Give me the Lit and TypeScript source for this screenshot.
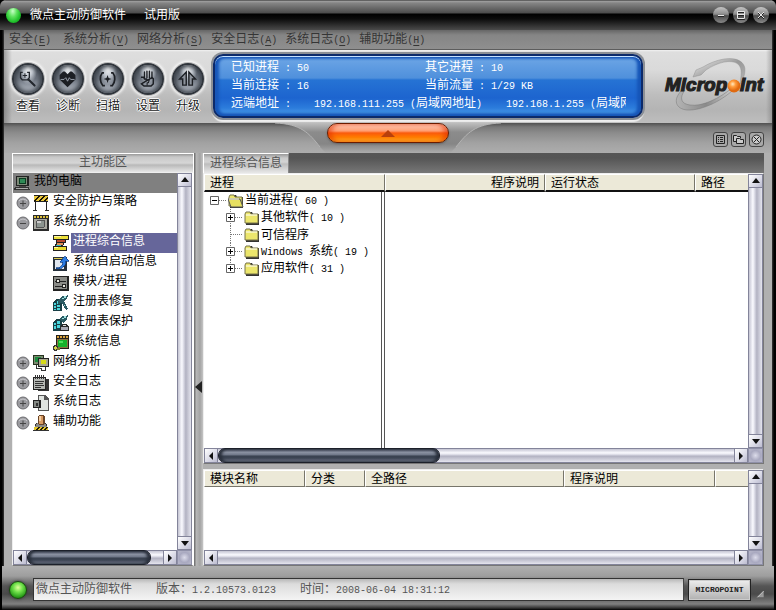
import { LitElement, html, css, svg, nothing } from "lit";
import { customElement, state, property } from "lit/decorators.js";
import { classMap } from "lit/directives/class-map.js";

// Half-width characters sit on a 6px grid next to 12px ideographs.
const mixed = (text: string) =>
  text
    .split(/([\x20-\x7e]+)/)
    .filter((s) => s.length)
    .map((s) => (/^[\x20-\x7e]+$/.test(s) ? html`<span class="half">${s}</span>` : s));

const shared = css`
  * { box-sizing: border-box; }
  :host {
    font: 12px/16px "Liberation Sans", "Noto Sans CJK SC", sans-serif;
    color: #000;
  }
  .half {
    font-family: "Liberation Mono", monospace;
    font-size: 10px;
    white-space: pre;
  }
  button {
    font: inherit;
    color: inherit;
    background: none;
    border: 0;
    padding: 0;
    margin: 0;
    cursor: pointer;
  }
  svg { display: block; }
`;

const toolIcons: Record<string, unknown> = {
  查看: svg`<path d="M5.500 4H3v6l2 2.500h6l2-2.500V4h-2.500" fill="none" stroke="#22262c" stroke-width="1.500"/><path d="M5.500 7.500h5M8 5v5" stroke="#22262c" stroke-width="1.200"/><path d="M12 12l7 7" stroke="#22262c" stroke-width="2.400" stroke-linecap="round"/>`,
  诊断: svg`<path d="M11 21L2 12V7l4-4h2l3 3 3-3h2l4 4v5z" fill="#1c1f24"/><path d="M3 12h4l2-2 2 4 2-4 1.500 2H19" fill="none" stroke="#a4acb8" stroke-width="1"/>`,
  扫描: svg`<path d="M7 4.500H5C1.500 9 2.500 15 5.500 19h2.500M15 4.500h2C20.500 9 19.500 15 16.500 19H14" fill="none" stroke="#1c1f24" stroke-width="1.900"/><path d="M11 7l1.200 3.300L15.500 11.500l-3.300 1.200L11 16l-1.200-3.300L6.500 11.500l3.300-1.200z" fill="#1c1f24"/>`,
  设置: svg`<path d="M7.500 10V3.500M10.300 10V2.500M13.100 10V2.500M16 11V3.500" stroke="#1c1f24" stroke-width="1.600" stroke-linecap="round"/><path d="M3.500 9.500h3l1 2h3M16 10l1.500 1v6L15 19.500H7L4 17z" fill="none" stroke="#1c1f24" stroke-width="1.600"/><path d="M8.500 12.500H13l-1 3-1.500.5v3" fill="none" stroke="#1c1f24" stroke-width="1.200"/>`,
  升级: svg`<path d="M9.500 18.500V3.500L2 11.500h3.500v7zM12.500 18.500V3.500l7.500 8h-3.500v7z" fill="#8d939c" stroke="#1c1f24" stroke-width="1.600"/>`,
};

const stripes = svg`<path d="M1 1h14v5H1z" fill="#e9c63a"/><path d="M1 5l4-4h2L2 6H1zM5 6l5-5h2L7 6zM10 6l5-5v2l-3 3z" fill="#1a1400"/>`;

const treeIcons: Record<string, unknown> = {
  computer: svg`<path d="M2 1h13v10H2z" fill="#222"/><path d="M3 2h10v8H3z" fill="#7d8a78"/><path d="M5 3h7v6H5z" fill="#0c3b22"/><path d="M6 4h5v4H6z" fill="#2f8a56"/><path d="M5 11h7v1H5z" fill="#444"/><path d="M1 12h14l1 3H0z" fill="#333"/><path d="M2 13h12v1H2z" fill="#aaa"/>`,
  barrier: svg`${stripes}<path d="M1 0h14v1H1zM1 6h14v1H1z" fill="#222"/><path d="M2 6h1v9H2zM13 6h1v9h-1z" fill="#222"/><path d="M0 15h4v1H0zM12 15h4v1h-4z" fill="#333"/>`,
  monitor: svg`<path d="M0 0h16v16H0z" fill="#2b2b2b"/><path d="M1 1h14v2H1z" fill="#d9bd3c"/><path d="M3 1h1v2H3zM6 1h1v2H6zM9 1h1v2H9zM12 1h1v2h-1z" fill="#222"/><path d="M1 4h13v10H1z" fill="#a8a8a0"/><rect x="3" y="5" width="9" height="8" rx="2" fill="#555"/><path d="M4 6h7v6H4z" fill="#8d9590"/><path d="M4 6h4v2H4z" fill="#ccc"/>`,
  bars: svg`<path d="M0 0h16v5h-3v3h-2v2h-1v1h4v5H0v-5h2V9h1V5H0z" fill="#222"/><path d="M1 1h14v3H1z" fill="#ece03a"/><path d="M1 1h7v1H1z" fill="#fff9a0"/><path d="M4 5h8v2H4z" fill="#b8492c"/><path d="M4 8h6v2H4z" fill="#e09058"/><path d="M3 10h5v1H3z" fill="#32bac4"/><path d="M1 12h12v3H1z" fill="#e8dc30"/><path d="M1 12h4v1H1z" fill="#fff9a0"/>`,
  startup: svg`<path d="M0 2h14v14H0z" fill="#26303c"/><path d="M1 3h9v1H1z" fill="#e0cc50"/><path d="M2 5h9v9H2z" fill="#dfe6f0"/><path d="M3 13c5 0 7-3 7-6H7l5-6 4 5h-3c0 5-3 8-10 8z" fill="#2c7be0" stroke="#0c3a80" stroke-width=".7"/>`,
  module: svg`<rect width="16" height="15" y="1" rx="1" fill="#222"/><path d="M1 2h13v12H1z" fill="#8b8c88"/><path d="M2 6h11v1H2zM2 11h11v1H2z" fill="#222"/><path d="M3 4h4v4H3zM9 9h4v4H9z" fill="#222"/><path d="M4 5h2v2H4zM10 10h2v2h-2z" fill="#e8e8e0"/>`,
  repair: svg`<path d="M0 7l4-3 5 1v11H0z" fill="#183f46"/><path d="M1 8h2v2H1zM4 6h3v3H4zM1 11h2v2H1zM4 10h3v2H4zM1 14h2v1H1zM4 13h3v2H4z" fill="#48d5dc"/><path d="M6 4l4-4 1 2 4-2-1 4-3 2 4 8-2 1-5-8-2 3-1-3z" fill="#2b5a62"/><path d="M8 4l2-2 1 2zM11 1h2v2h-2zM11 9l3 5-3-4z" fill="#9fe4e4"/>`,
  protect: svg`<path d="M0 7l4-3 5 1v11H0z" fill="#183f46"/><path d="M1 8h2v2H1zM4 6h3v3H4zM1 11h2v3H1zM4 10h3v3H4z" fill="#48d5dc"/><path d="M6 4l4-4 1 2 4-2-1 4-4 4z" fill="#2b5a62"/><path d="M8 4l2-2 1 2zM11 1h2v2h-2z" fill="#9fe4e4"/><path d="M7 11l2-2h4l3 2v5H7z" fill="#2a2a2a"/><path d="M8 12h7v3H8z" fill="#a9a9b4"/><path d="M10 10h3v1h-3z" fill="#ddd"/>`,
  sysinfo: svg`<path d="M3 0h13v14H3z" fill="#252018"/><path d="M4 1h11v2H4z" fill="#d9a23c"/><path d="M6 1h1v2H6zM9 1h1v2H9zM12 1h1v2h-1z" fill="#222"/><path d="M4 4h11v9H4z" fill="#8a7444"/><path d="M5 5h9v7H5z" fill="#16b22a"/><path d="M6 6h4v2H6z" fill="#4de05a"/><circle cx="2.500" cy="13" r="2.200" fill="#d8d448" stroke="#333"/><path d="M4 13h3v2H4z" fill="#807a30"/>`,
  network: svg`<path d="M0 0h11v10H0z" fill="#25331f"/><path d="M1 1h9v8H1z" fill="#7c8a70"/><path d="M2 2h6v5H2z" fill="#1b8a3c"/><path d="M5 3h11v9H5z" fill="#222"/><path d="M6 4h9v7H6z" fill="#a9a890"/><path d="M8 5h5v4H8z" fill="#d8dc18"/><path d="M3 10v3h5v2h4v-3" fill="none" stroke="#333"/>`,
  notes: svg`<path d="M12 4h4v12H5v-2h7z" fill="#333"/><path d="M0 2h13v13H0z" fill="#222"/><path d="M1 3h11v11H1z" fill="#b5b8b4"/><path d="M2 0h1v4H2zM4 0h1v4H4zM6 0h1v4H6zM8 0h1v4H8zM10 0h1v4h-1z" fill="#333"/><path d="M2 6h9v1H2zM2 8h8v1H2zM2 10h9v1H2zM2 12h6v1H2z" fill="#333"/>`,
  syslog: svg`<path d="M5 0h7l4 4v12H5z" fill="#555"/><path d="M6 1h5v4h4v10H6z" fill="#dfe3df"/><path d="M0 5h8v8H0z" fill="#222"/><path d="M1 6h5v6H1z" fill="#858a85"/><path d="M3 8h2v3H3z" fill="#333"/>`,
  helper: svg`<path d="M3 8h10l3 8H0z" fill="#333"/><path d="M4 8h8l2 4H2z" fill="#8a8a88"/><path d="M1 12h14v3H1z" fill="#e4c72c"/><path d="M2 15l3-3h2l-3 3zM6 15l3-3h2l-3 3zM10 15l3-3h2l-3 3z" fill="#221a00"/><path d="M6 0h4l2 2v6l-2 2H6L5 8V2z" fill="#6b4426"/><path d="M6 1h4v8H6z" fill="#d89a62"/><path d="M6 1h2v5H6z" fill="#f3cfa4"/>`,
};

const toggle = (open: boolean) => html`
  <svg width="14" height="14" viewBox="0 0 14 14" aria-hidden="true">
    <circle cx="7" cy="7" r="6" fill="#9a9a9e" stroke="#6c6c70" />
    <path d="M3 5a5 5 0 0 1 8 0" fill="none" stroke="#c8c8cc" />
    <path d=${open ? "M4 7.500h6" : "M4 7.500h6M7 4.500v6"} stroke="#444" />
  </svg>`;

@customElement("scroll-bar")
class ScrollBar extends LitElement {
  @property({ type: Boolean, reflect: true }) vertical = false;
  @property({ type: Number }) thumb = 0;

  static styles = [
    shared,
    css`
      :host { display: flex; height: 15px; min-width: 0; border: 1px solid #83849a; }
      :host([vertical]) { flex-direction: column; width: 15px; height: auto; min-height: 0; }
      .track {
        flex: 1; display: flex; min-width: 0; min-height: 0;
        background: linear-gradient(#c4c4d2, #fafaff 30%, #d6d6e2 45%, #b2b2c2 55%, #e4e4ee);
      }
      :host([vertical]) .track {
        background: linear-gradient(to right, #c4c4d2, #fafaff 30%, #d6d6e2 45%, #b2b2c2 60%, #e4e4ee);
      }
      .arrow {
        flex: none; width: 13px; height: 13px; display: grid; place-items: center;
        background: linear-gradient(135deg, #fff, #d9d9e6 60%, #bcbcd0);
        border: 0 solid #83849a;
      }
      :host(:not([vertical])) .back { border-right-width: 1px; }
      :host(:not([vertical])) .ahead { border-left-width: 1px; }
      :host([vertical]) .back { border-bottom-width: 1px; }
      :host([vertical]) .ahead { border-top-width: 1px; }
      .thumb {
        height: 15px; margin-top: -1px; border-radius: 7px; border: 1px solid #1c202a;
        background: linear-gradient(#454b5a, #8b92a2 25%, #6b7384 48%, #39414f 52%, #3c4453 70%, #7e8595);
        box-shadow: inset 3px 0 3px #2a303c, inset -3px 0 3px #2a303c;
      }
    `,
  ];

  render() {
    const back = this.vertical ? "M4 1l4 5H0z" : "M2 4l4-4v8z";
    const ahead = this.vertical ? "M4 7L0 2h8z" : "M6 4L2 0v8z";
    const arrow = (d: string) => svg`<svg width="8" height="8" viewBox="0 0 8 8"><path d=${d} fill="#111"/></svg>`;
    return html`
      <button class="arrow back" aria-label=${this.vertical ? "向上" : "向左"}>${arrow(back)}</button>
      <div class="track">
        ${this.thumb ? html`<div class="thumb" style="width:${this.thumb}%"></div>` : nothing}
      </div>
      <button class="arrow ahead" aria-label=${this.vertical ? "向下" : "向右"}>${arrow(ahead)}</button>`;
  }
}

interface TreeItem { label: string; icon: string; level: number; open?: boolean; }

@customElement("app-root")
class AppRoot extends LitElement {
  @state() private selected = "进程综合信息";

  private menus = [["安全", "E"], ["系统分析", "V"], ["网络分析", "S"], ["安全日志", "A"], ["系统日志", "O"], ["辅助功能", "H"]];

  private tree: TreeItem[] = [
    { label: "我的电脑", icon: "computer", level: 0 },
    { label: "安全防护与策略", icon: "barrier", level: 1, open: false },
    { label: "系统分析", icon: "monitor", level: 1, open: true },
    { label: "进程综合信息", icon: "bars", level: 2 },
    { label: "系统自启动信息", icon: "startup", level: 2 },
    { label: "模块/进程", icon: "module", level: 2 },
    { label: "注册表修复", icon: "repair", level: 2 },
    { label: "注册表保护", icon: "protect", level: 2 },
    { label: "系统信息", icon: "sysinfo", level: 2 },
    { label: "网络分析", icon: "network", level: 1, open: false },
    { label: "安全日志", icon: "notes", level: 1, open: false },
    { label: "系统日志", icon: "syslog", level: 1, open: false },
    { label: "辅助功能", icon: "helper", level: 1, open: false },
  ];

  private groups = [
    { label: "其他软件( 10 )", expandable: true },
    { label: "可信程序", expandable: false },
    { label: "Windows 系统( 19 )", expandable: true },
    { label: "应用软件( 31 )", expandable: true },
  ];

  static styles = [
    shared,
    css`
      :host { display: block; background: #000; }
      .window {
        display: flex; flex-direction: column; min-height: 100vh;
        border-radius: 6px 6px 4px 4px; overflow: hidden;
        background: linear-gradient(to right, #000 2px, #3a3a3a 4px, transparent 4px calc(100% - 4px), #3a3a3a calc(100% - 4px), #000 calc(100% - 2px)), #b0b0b0;
      }
      .title {
        display: flex; align-items: center; height: 30px; padding: 0 7px 0 6px; color: #fff;
        background: linear-gradient(#222 0, #a2a2a2 1px, #858585 3px, #4c4c4c 13px, #000 14px, #0c0c0c 19px, #4a4a4a 30px);
      }
      .orb {
        width: 15px; height: 15px; border-radius: 50%; margin-right: 9px;
        background: radial-gradient(ellipse at 45% 20%, #c8ffc8, #5ce25c 35%, #1fbf2a 65%, #0c8a18);
      }
      h1 { margin: 0; font-size: 12px; font-weight: normal; line-height: 16px; flex: 1; }
      h1 span { margin-left: 18px; }
      .controls { display: flex; gap: 4px; }
      .controls button {
        width: 16px; height: 16px; border-radius: 50%;
        background: linear-gradient(#c4c4c4, #8c8c8c 45%, #4a4a4a 55%, #8a8a8a);
      }
      .menu {
        display: flex; gap: 8px; height: 20px; margin: 0 4px; padding: 0 5px; align-items: center; color: #353535;
        background: linear-gradient(#666, #858585 5px, #8f8f8f); border-bottom: 1px solid #5d5d5d;
      }
      .menu button { min-width: 46px; text-align: left; white-space: nowrap; }
      .menu u { text-underline-offset: 2px; }
      .toolbar {
        display: flex; height: 73px; margin: 0 4px; padding-left: 4px;
        background: linear-gradient(to right, #6668, transparent 8px calc(100% - 6px), #6666), linear-gradient(#f2f2f2, #dedede 2px, #dadada 20px, #bdbdbd 45px, #b4b4b4 60px, #bebebe);
      }
      .tools { display: flex; flex: none; }
      .tool { width: 40px; display: flex; flex-direction: column; align-items: center; padding: 13px 0 8px; line-height: 16px; text-shadow: 1px 0 #fff, -1px 0 #fff, 0 1px #fff, 0 -1px #fff; color: #222; }
      .disc {
        display: grid; place-items: center; width: 32px; height: 32px; border-radius: 50%; margin-bottom: 3px;
        border: 2px solid #30353c;
        background: radial-gradient(ellipse at 50% 8%, #fff, #c4cad2 25%, transparent 48%), linear-gradient(#59606a, #6d747f 50%, #c0c6d0);
        box-shadow: 0 0 0 1px #bbb, 0 0 3px 2px #fff, inset 0 0 4px 2px #3a4048;
      }
      .monitor {
        flex: 1; min-width: 0; margin: 4px 21px 5px 5px; padding: 5px 15px 4px 16px; color: #fff; overflow: hidden;
        border: 2px solid #0c2a6a; border-radius: 10px; display: grid; grid-template-columns: 194px 1fr; grid-auto-rows: 18px; line-height: 18px;
        background: linear-gradient(#6fa7e6, #4f90dc 22px, #2673d4 24px, #1d64cf 42px, #2c7cdc 52px, #54a0ea);
        box-shadow: 0 0 0 2px #8b8f95, 0 3px 1px 1px #eee, inset 0 1px #c5e2ff, inset 2px 0 3px 2px #1756b8, inset -2px 0 3px 2px #1756b8;
        white-space: nowrap; align-content: start;
      }
      .monitor > div { margin-top: -3px; }
      .remote { grid-column: 1 / -1; overflow: hidden; }
      .remote b { font-weight: normal; margin-left: 17px; }
      .remote b + b { margin-left: 24px; }
      .logo { flex: none; width: 108px; padding-top: 4px; }
      .tray {
        display: grid; grid-template-columns: 1fr 226px 1fr; height: 30px; margin: 0 4px;
        background: linear-gradient(#505050, #777 4px, #8c8c8c 10px, #a2a2a2 20px, #adadad);
      }
      .hump { grid-area: 1 / 2; }
      .drawer {
        grid-area: 1 / 2; justify-self: center; width: 122px; height: 20px; border-radius: 10px; display: grid; place-items: center;
        border: 1px solid #6b1c00;
        background: linear-gradient(#ffd9c8, #ff9c70 7px, #fa5a0c 9px, #ff7a00 13px, #ffc02a 18px);
        box-shadow: inset 4px 0 4px #e0300088, inset -4px 0 4px #e0300088, 0 1px 2px #4448;
      }
      .views { grid-area: 1 / 3; display: flex; gap: 3px; justify-content: flex-end; padding: 9px 8px 0 0; }
      .views button { width: 15px; height: 15px; border: 1px solid #444; border-radius: 3px; display: grid; place-items: center; background: #a8a8a8; }
      .main { flex: 1; display: grid; grid-template-columns: 182px 9px 1fr; padding: 0 12px 0 12px; min-height: 0; }
      .side, .content { display: flex; flex-direction: column; min-width: 0; }
      .head {
        height: 19px; margin: 0; font-size: 12px; font-weight: normal; text-align: center; line-height: 16px; color: #555;
        border: 1px solid #fff; border-bottom: 0; background: linear-gradient(#999, #c8c8c8 3px, #d6d6d6 9px, #b9b9b9 11px, #e6e6e6);
      }
      .box {
        display: grid; grid-template-columns: 1fr 15px; grid-template-rows: 1fr 15px; background: #fff; min-height: 0;
        border: 1px solid #eee; border-right-color: #777; border-bottom-color: #777;
      }
      .side .box, .grow { flex: 1; }
      .side .box { border-right: 2px solid #fff; box-shadow: inset 0 0 #fff, 1px 0 #777; }
      .corner { background: radial-gradient(circle, #dcdcea, #a9a9c0 55%, #b9b9cb); border: 1px solid #8f90a8; }
      .tree { list-style: none; margin: 0; padding: 0; overflow: hidden; }
      .node { display: flex; align-items: center; height: 20px; padding-left: 3px; white-space: nowrap; }
      .node.top { background: #808080; padding-left: 1px; }
      .node.leaf { padding-left: 40px; }
      .node .fold { width: 14px; margin-right: 3px; }
      .node .pick { flex: 1; height: 20px; text-align: left; padding: 0 0 4px 2px; margin-left: 2px; line-height: 16px; }
      .node .pick.on { background: #66669a; color: #fff; }
      .split { display: grid; align-items: center; background: linear-gradient(to right, #777 1px, #b8b8b8 2px, #a4a4a4 6px, #c4c4c4); padding: 54px 0 0 1px; }
      .tabs { display: flex; height: 20px; background: linear-gradient(#565656, #555 5px, #777); }
      .tab { width: 86px; color: #555; border: 1px solid #fff; border-bottom: 0; border-right: 1px solid #888; line-height: 17px; background: linear-gradient(#999, #cacaca 4px, #d4d4d4 8px, #bdbdbd 10px, #e8e8e8); }
      .pane { overflow: hidden; min-width: 0; }
      table { width: 100%; height: 100%; border-collapse: separate; border-spacing: 0; table-layout: fixed; }
      th {
        height: 17px; font-weight: normal; text-align: left; line-height: 14px; padding: 0 5px; background: #ece9d8; white-space: nowrap; overflow: hidden;
        border-top: 1px solid #fff; border-left: 1px solid #fff; border-right: 1px solid #77756a; border-bottom: 1px solid #77756a;
      }
      th:last-child { border-right: 0; }
      .processes th { border-bottom: 2px solid #111; height: 18px; }
      th.end { text-align: right; }
      td { padding: 0; height: 17px; vertical-align: top; }
      .processes td:first-child {
        background: linear-gradient(#555, #555) right 2px top / 1px 100% no-repeat;
        border-right: 1px solid #555;
      }
      .rest td { height: auto; }
      .proc { display: flex; align-items: center; height: 17px; padding-left: 6px; white-space: nowrap; }
      .proc.sub { padding-left: 22px; }
      .proc .name { padding-left: 1px; }
      .modules { height: 97px; margin-top: 5px; }
      .modules table { height: auto; }
      .status { display: flex; align-items: center; gap: 4px; height: 44px; padding: 3px 8px 0 7px; margin: 0 2px; background: linear-gradient(#b0b0b0, #9e9e9e 10px, #555 20px, #4a4a4a 28px, #808080 38px, #333 42px, #000); }
      .status .orb { width: 18px; height: 18px; margin: 0 2px 0 0; border: 1px solid #174d0c; background: radial-gradient(circle at 50% 35%, #e0ff9c, #6fe04a 35%, #2da01c 70%, #145c0c); box-shadow: 0 0 3px #333; }
      .info { flex: 1; height: 23px; border: 1px solid #333; border-right-color: #444; background: linear-gradient(#b8b8b8, #dcdcdc 5px, #f4f4f4); color: #555; display: flex; gap: 24px; padding: 2px; line-height: 17px; white-space: nowrap; }
      .plate { width: 63px; height: 22px; border: 1px solid #222; background: linear-gradient(#eee, #b0b0b0); display: grid; place-items: center; font: bold 8px/20px "Liberation Mono", monospace; color: #222; box-shadow: inset 0 0 0 1px #ccc; }
      .grip { align-self: flex-end; padding-bottom: 8px; }
    `,
  ];

  private logo() {
    return html`<svg width="104" height="62" viewBox="0 0 104 62" role="img" aria-label="Micropoint">
      <defs>
        <linearGradient id="arc" x1="0" y1="0" x2="1" y2="1"><stop offset="0" stop-color="#f4f4f4" /><stop offset=".5" stop-color="#999" /><stop offset="1" stop-color="#b8b8b8" /></linearGradient>
        <linearGradient id="ring" x1="0" y1="0" x2="1" y2="0"><stop offset="0" stop-color="#b4b4b4" /><stop offset=".5" stop-color="#8a8a8a" /><stop offset="1" stop-color="#d4d4d4" /></linearGradient>
        <radialGradient id="ball" cx=".4" cy=".35"><stop offset="0" stop-color="#ffe8c0" /><stop offset=".45" stop-color="#ff9c3c" /><stop offset="1" stop-color="#e06a10" /></radialGradient>
      </defs>
      <path d="M39 13C52 5 68 2 76 7c6 4 6 10 3 18l-3 5c1-8 3-15-2-20-7-5-20-2-32 6l-5 5-8 2 3-7z" fill="url(#arc)" stroke="#888" stroke-width=".4" />
      <path d="M18 36C8 46 12 55 23 56c16 1 38-11 49-23l-4 1C56 44 38 53 26 51c-9-1-11-7-5-15z" fill="url(#ring)" stroke="#777" stroke-width=".5" />
      <g font-family="Liberation Sans" font-weight="bold" font-style="italic" font-size="19" fill="#222" stroke="#222" stroke-width="1.200"><text x="1" y="37">Microp</text><text x="76" y="37">int</text></g>
      <circle cx="70" cy="32" r="6.500" fill="url(#ball)" />
    </svg>`;
  }

  private folder(open = false) {
    return svg`<svg width="16" height="14" viewBox="0 0 16 14" aria-hidden="true"><path d="M2 3l1-2h5l1 2h6v11H2z" fill="#333"/><path d="M1 3l1-2h4l1 2h7v9H1z" fill="#ece66c" stroke="#77734a" stroke-width="1"/>${open ? svg`<path d="M0 5h12l3 8H3z" fill="#e6df60" stroke="#555" stroke-width="1"/><path d="M1 5h10" stroke="#fff"/>` : svg`<path d="M2 4h11" stroke="#fff"/>`}</svg>`;
  }

  private expander(kind: "minus" | "plus" | "none", last = false) {
    return html`<svg width="18" height="17" viewBox="0 0 18 17" aria-hidden="true">
      ${kind === "minus" ? nothing : svg`<path d=${last ? "M4.500 0v8" : "M4.500 0v17"} stroke="#777" stroke-dasharray="1 1"/>`}
      <path d="M5 8.500h12" stroke="#777" stroke-dasharray="1 1" />
      ${kind === "none" ? nothing : svg`<path d="M.5 4.500h8v8h-8z" fill="#fff" stroke="#666"/><path d=${kind === "minus" ? "M2 8.500h5" : "M2 8.500h5M4.500 6v5"} stroke="#000"/>`}
    </svg>`;
  }

  private node(item: TreeItem) {
    const on = item.label === this.selected;
    return html`<li class=${classMap({ node: true, top: item.level === 0, leaf: item.level === 2 })}>
      ${item.level === 1 ? html`<button class="fold" aria-label=${item.open ? "折叠" : "展开"}>${toggle(!!item.open)}</button>` : nothing}
      <svg width="16" height="16" viewBox="0 0 16 16" shape-rendering="crispEdges" aria-hidden="true">${treeIcons[item.icon]}</svg>
      <button class=${classMap({ pick: true, on })} @click=${() => (this.selected = item.label)}>${mixed(item.label)}</button>
    </li>`;
  }

  render() {
    return html`<div class="window">
      <header class="title">
        <span class="orb"></span>
        <h1>微点主动防御软件<span>试用版</span></h1>
        <div class="controls">
          ${[["最小化", "M5 8.500h6"], ["还原", "M4.500 4.500h7v7h-7zM5 7.500h6"], ["关闭", "M5 5l6 6M11 5l-6 6"]].map(
            ([name, d]) => html`<button aria-label=${name}><svg width="16" height="16" viewBox="0 0 16 16"><path d=${d} stroke="#222" fill="none" transform="translate(0 1)" /><path d=${d} stroke="#e8e8e8" fill="none" /></svg></button>`
          )}
        </div>
      </header>
      <nav class="menu">
        ${this.menus.map(([name, key]) => html`<button>${name}<span class="half">(<u>${key}</u>)</span></button>`)}
      </nav>
      <div class="toolbar">
        <div class="tools">
          ${Object.entries(toolIcons).map(([name, icon]) => html`<button class="tool"><span class="disc"><svg width="22" height="22" viewBox="-1 -1 25 25">${icon}</svg></span>${name}</button>`)}
        </div>
        <section class="monitor">
          <div>${mixed("已知进程 : 50")}</div><div>${mixed("其它进程 : 10")}</div>
          <div>${mixed("当前连接 : 16")}</div><div>${mixed("当前流量 : 1/29 KB")}</div>
          <div class="remote">${mixed("远端地址 : ")}<b>${mixed("192.168.111.255 (局域网地址)")}</b><b>${mixed("192.168.1.255 (局域网")}</b></div>
        </section>
        <div class="logo">${this.logo()}</div>
      </div>
      <div class="tray">
        <svg class="hump" width="226" height="30" viewBox="0 0 226 30" aria-hidden="true">
          <defs><linearGradient id="hump" x1="0" y1="0" x2="0" y2="1"><stop offset="0" stop-color="#bebebe" /><stop offset=".3" stop-color="#8c8c8c" /><stop offset=".7" stop-color="#868686" /><stop offset="1" stop-color="#adadad" /></linearGradient></defs>
          <path d="M0 0C26 1 34 10 45 24L51 30H175L181 24C192 10 200 1 226 0z" fill="url(#hump)" />
          <path d="M0 0C26 1 34 10 45 24M181 24C192 10 200 1 226 0" fill="none" stroke="#b4b4b4" />
        </svg>
        <button class="drawer" aria-label="收起"><svg width="14" height="7" viewBox="0 0 14 7"><path d="M7 0l7 7H0z" fill="#b8400c" /></svg></button>
        <div class="views">
          <button aria-label="列表"><svg width="11" height="11" viewBox="0 0 11 11"><path d="M1.500 1.500h8v8h-8zM3 3.500h1M5 3.500h3M3 5.500h1M5 5.500h3M3 7.500h1M5 7.500h3" fill="none" stroke="#222" /></svg></button>
          <button aria-label="窗口"><svg width="11" height="11" viewBox="0 0 11 11"><path d="M.5 7.500v-6h3l1 1h3v2M.5 7.500h3M3.500 9.500v-5h3l1 1h3v4z" fill="#ccc" stroke="#222" /></svg></button>
          <button aria-label="关闭窗口"><svg width="11" height="11" viewBox="0 0 11 11"><circle cx="5.500" cy="5.500" r="4.500" fill="#ccc" stroke="#222" /><path d="M3 3l5 5M8 3L3 8" stroke="#222" /></svg></button>
        </div>
      </div>
      <main class="main">
        <aside class="side">
          <h2 class="head">主功能区</h2>
          <div class="box">
            <ul class="tree">${this.tree.map((item) => this.node(item))}</ul>
            <scroll-bar vertical></scroll-bar>
            <scroll-bar .thumb=${91}></scroll-bar>
            <div class="corner"></div>
          </div>
        </aside>
        <div class="split"><svg width="7" height="12" viewBox="0 0 7 12" aria-hidden="true"><path d="M0 6l7-6v12z" fill="#222" /></svg></div>
        <section class="content">
          <div class="tabs"><button class="tab">进程综合信息</button></div>
          <div class="box grow">
            <div class="pane">
              <table class="processes">
                <colgroup><col width="181" /><col width="160" /><col width="150" /><col /></colgroup>
                <thead><tr><th>进程</th><th class="end">程序说明</th><th>运行状态</th><th>路径</th></tr></thead>
                <tbody>
                  <tr><td><div class="proc">${this.expander("minus")}${this.folder(true)}<span class="name">${mixed("当前进程( 60 )")}</span></div></td><td></td><td></td><td></td></tr>
                  ${this.groups.map((g, i) => html`<tr><td><div class="proc sub">${this.expander(g.expandable ? "plus" : "none", i === this.groups.length - 1)}${this.folder()}<span class="name">${mixed(g.label)}</span></div></td><td></td><td></td><td></td></tr>`)}
                  <tr class="rest"><td></td><td></td><td></td><td></td></tr>
                </tbody>
              </table>
            </div>
            <scroll-bar vertical></scroll-bar>
            <scroll-bar .thumb=${43}></scroll-bar>
            <div class="corner"></div>
          </div>
          <div class="box modules">
            <div class="pane">
              <table>
                <colgroup><col width="101" /><col width="60" /><col width="199" /><col width="151" /><col /></colgroup>
                <thead><tr><th>模块名称</th><th>分类</th><th>全路径</th><th>程序说明</th><th></th></tr></thead>
              </table>
            </div>
            <scroll-bar vertical></scroll-bar>
            <scroll-bar></scroll-bar>
            <div class="corner"></div>
          </div>
        </section>
      </main>
      <footer class="status">
        <span class="orb"></span>
        <div class="info"><span>微点主动防御软件</span><span>版本：${mixed("1.2.10573.0123")}</span><span>时间：${mixed("2008-06-04 18:31:12")}</span></div>
        <div class="plate">MICROPOINT</div>
        <svg class="grip" width="11" height="19" viewBox="0 0 11 19" aria-hidden="true"><path d="M11 0v11H0z" fill="#999" /><path d="M0 11L11 0" stroke="#fff" /></svg>
      </footer>
    </div>`;
  }
}
